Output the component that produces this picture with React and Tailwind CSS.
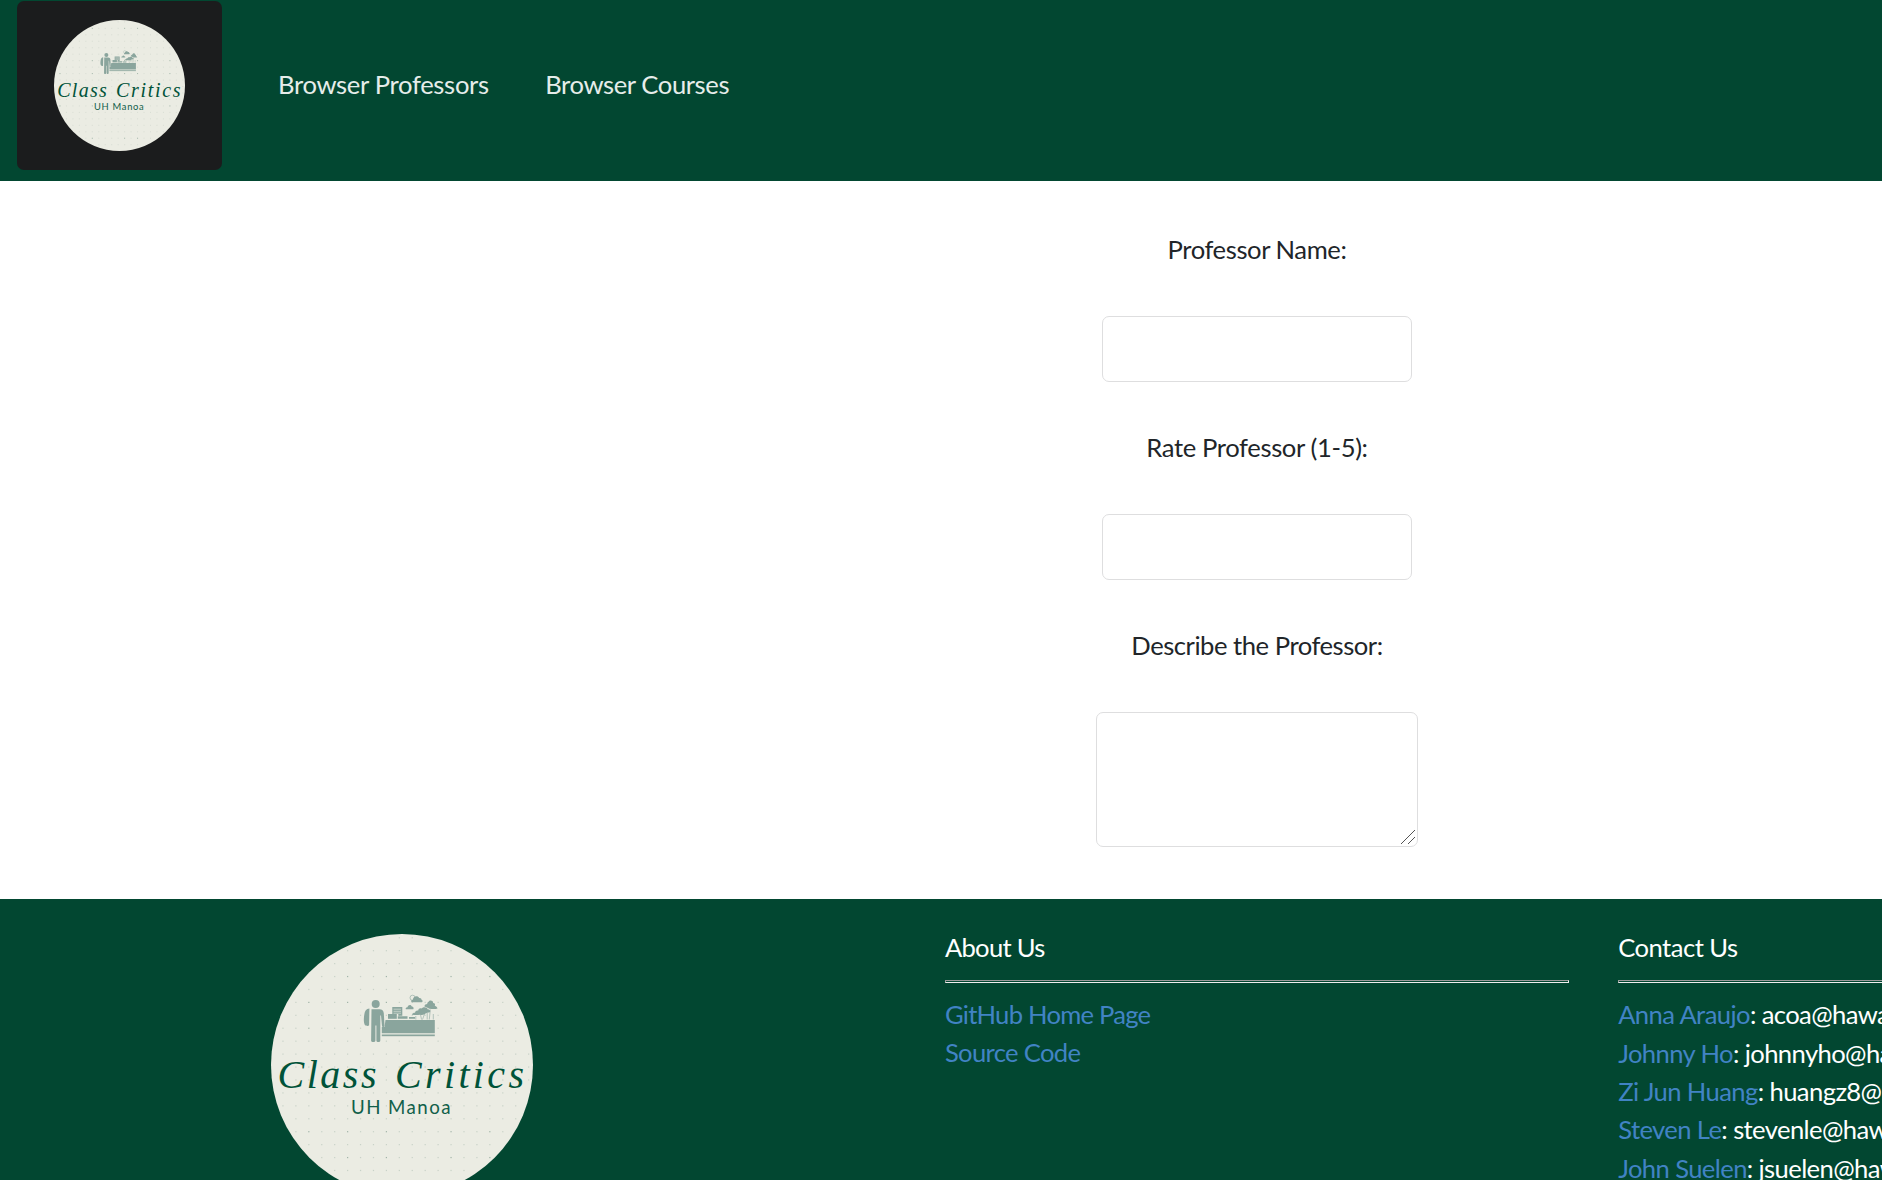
import React from "react";

const GRID = 12.93;
const dots = [];
for (let r = 0; r < 21; r++) {
  for (let c = 0; c < 21; c++) {
    const x = 115.4 + (c - 9) * GRID;
    const y = 68.4 + (r - 5) * GRID;
    if (Math.hypot(x - 131, y - 131) < 128) dots.push({ x, y, r, c });
  }
}

function Logo({ className, compact = false }) {
  const cols = compact ? [1, 6, 11, 13, 18] : [3, 6, 9, 14, 17];
  const rows = compact ? [1, 6, 8, 13, 18] : [3, 5, 7, 15, 17];
  const size = compact ? 2 : 1.2;
  return (
    <svg viewBox="0 0 262 262" className={className} role="img" aria-label="Class Critics UH Manoa">
      <circle cx="131" cy="131" r="131" fill="#ebece3" />
      {dots.map((d) => (
        <rect
          key={`${d.r}-${d.c}`}
          x={d.x - size / 2}
          y={d.y - size / 2}
          width={size}
          height={size}
          fill="#6f8f80"
          opacity={cols.includes(d.c) && rows.includes(d.r) ? 0.6 : compact ? 0.15 : 0.28}
        />
      ))}
      <g fill="#8aa59d">
        {/* student with backpack */}
        <circle cx="104.700" cy="70" r="4" />
        <path d="M100.500 75.200h8c2.600 0 4 1.600 4.300 4l.7 12.500c0 1.500-2.300 1.700-2.500.2l-1-10.500h-.7v25c0 2.200-3.900 2.200-3.900 0v-15h-1v15c0 2.200-4.300 2.200-4.300 0z" />
        <path d="M98.400 74.600c-3.300.4-4.600 2.600-5 5.400-.7 4-.9 8.500.3 10.700 1 1.300 3.500 1.600 4.400.6z" />
        {/* desk */}
        <path d="M114.500 86h49.300v13.200h-53v-6.300h2.700z" />
        <rect x="110.800" y="100.500" width="53" height="1.700" />
        {/* books and papers */}
        <path d="M121.300 73h10v8.800h-4v-1.900h-6z" />
        <path d="M122.500 75.200h7.500M122.500 77.300h7.500M122.500 79.200h7.500" stroke="#ebece3" strokeWidth=".6" />
        <rect x="117" y="80" width="8.800" height="4.800" />
        <path d="M126.800 82.300h9.700v2.500h-9.700zM138 83h6v1.800h-6z" />
        {/* clouds and sun */}
        <path d="M140.800 68.300c-1.300-.8-.6-2.500 1-2.600.4-3.600 5-4.500 6.400-1.700 1.900-.2 2.600 1.300 2.400 2.100 1.300.2 1.300 1.600.3 2.200z" />
        <circle cx="141.600" cy="63.800" r="2.600" fill="none" stroke="#8aa59d" strokeWidth=".6" />
        <path d="M134.900 75.200c-.7-1 .2-2.100 1.600-2 .6-2.800 3.700-3 4.300-.7 1.500-.1 2.300 1.700 1.500 2.700z" />
        {/* trees */}
        <path d="M153.400 72.500c.2-2 1.500-2.600 2.800-2.600-.2-1.700 1.300-1.900 2-3 1.300-.7 3.900-.5 4 2.200 1.900.2 2.200 1.500 1.600 2.700 1.500.3 2.300 1.500 2.700 2.800-2.600.8-5.500.4-8 .2-1.600-1.100-3.500-1.700-5.100-2.300z" />
        <path d="M141 80.700c.3-1.500 1.500-2 3-2 .3-1.700 2-2.200 3.200-2.100.2-2 2-2.700 3.500-2 1.500-2 5.500-1.500 5.900.7 1.900-.2 3.100 1.500 2.500 2.800-1.800.9-3.800.7-5.300 1.900-1.800.9-3.200 1.300-4.700.7-2.600.4-5.300.4-8.100 0z" />
        <path d="M144.800 82v3.500M149.500 80.500l1 5M153.500 80l-2 5.500M156.200 79v6.500M159.300 75.500l-1 10M162.300 80v5.500" stroke="#8aa59d" strokeWidth=".6" />
      </g>
      <g fill="#005339" fontSize="40" fontStyle="italic" className="font-['Liberation_Serif',serif]">
        <text x="6.500" y="154.300" textLength="99" lengthAdjust="spacing">Class</text>
        <text x="124" y="154.300" textLength="129" lengthAdjust="spacing">Critics</text>
      </g>
      <text x="80" y="179.500" fontSize="18.700" textLength="99.500" lengthAdjust="spacing" fill="#11604a" className="font-[Lato,sans-serif]">
        UH Manoa
      </text>
    </svg>
  );
}

function Field({ label, spacing, children }) {
  return (
    <div className="flex flex-col items-center">
      <label className={`mb-[48px] leading-[37px] ${spacing}`}>{label}</label>
      {children}
    </div>
  );
}

function Rule() {
  return <div className="mt-[13.6px] mb-[12.1px] h-[3px] border border-t-[#9a9a9a] border-l-[#9a9a9a] border-r-[#eee] border-b-[#eee]" />;
}

const contacts = [
  ["Anna Araujo", "acoa@hawaii.edu"],
  ["Johnny Ho", "johnnyho@hawaii.edu"],
  ["Zi Jun Huang", "huangz8@hawaii.edu"],
  ["Steven Le", "stevenle@hawaii.edu"],
  ["John Suelen", "jsuelen@hawaii.edu"],
];

export default function App() {
  return (
    <div className="flex h-[1180px] w-full flex-col overflow-hidden bg-white font-[Lato,sans-serif] text-[25.6px] leading-[38.4px] text-[#212529]">
      <nav className="flex h-[181px] shrink-0 items-start bg-[#024731] pt-px pl-[17px] text-[#e6edea]">
        <a className="flex h-[169px] w-[205px] items-center justify-center rounded-[7px] bg-[#1b1c1d]">
          <Logo compact className="size-[131px]" />
        </a>
        <div className="ml-[56px] flex h-[167px] items-center gap-[56.500px] whitespace-nowrap">
          <a className="tracking-[-0.32px]">Browser Professors</a>
          <a className="tracking-[-0.4px]">Browser Courses</a>
        </div>
      </nav>

      <main className="flex h-[718px] w-[2514px] shrink-0 flex-col items-center gap-[47px] pt-[50px]">
        <Field label="Professor Name:" spacing="tracking-[-0.42px]">
          <input className="h-[66px] w-[310px] rounded-[7px] border border-[#dededf] bg-white" />
        </Field>
        <Field label="Rate Professor (1-5):" spacing="tracking-[-0.37px]">
          <input className="h-[66px] w-[310px] rounded-[7px] border border-[#dededf] bg-white" />
        </Field>
        <Field label="Describe the Professor:" spacing="tracking-[-0.47px]">
          <div className="relative h-[135px] w-[322px]">
            <textarea className="block h-full w-full resize-none rounded-[7px] border border-[#dededf] bg-white" />
            <svg viewBox="0 0 14 14" className="absolute right-[3px] bottom-[3px] size-[14px]" fill="none" stroke="#555" strokeWidth="1">
              <path d="M0 14L14 0M7 14l7-7" />
            </svg>
          </div>
        </Field>
      </main>

      <footer className="grid h-[281px] w-[2267px] shrink-0 grid-cols-[673.3px_673.3px_673.3px] bg-[#024731] pt-[29px] pl-[247px] text-white">
        <div className="px-[24px] pt-[6px]">
          <Logo className="size-[262px]" />
        </div>
        <div className="px-[24.6px]">
          <h2 className="tracking-[-0.7px]">About Us</h2>
          <Rule />
          <ul className="text-[#4183c4]">
            <li className="tracking-[-0.75px]">GitHub Home Page</li>
            <li className="-mt-[0.6px] tracking-[-0.65px]">Source Code</li>
          </ul>
        </div>
        <div className="px-[24.6px]">
          <h2 className="tracking-[-0.52px]">Contact Us</h2>
          <Rule />
          <ul className="tracking-[-0.6px]">
            {contacts.map(([name, email]) => (
              <li key={name} className="whitespace-nowrap">
                <a className="text-[#4183c4]">{name}</a>: {email}
              </li>
            ))}
          </ul>
        </div>
      </footer>
    </div>
  );
}
